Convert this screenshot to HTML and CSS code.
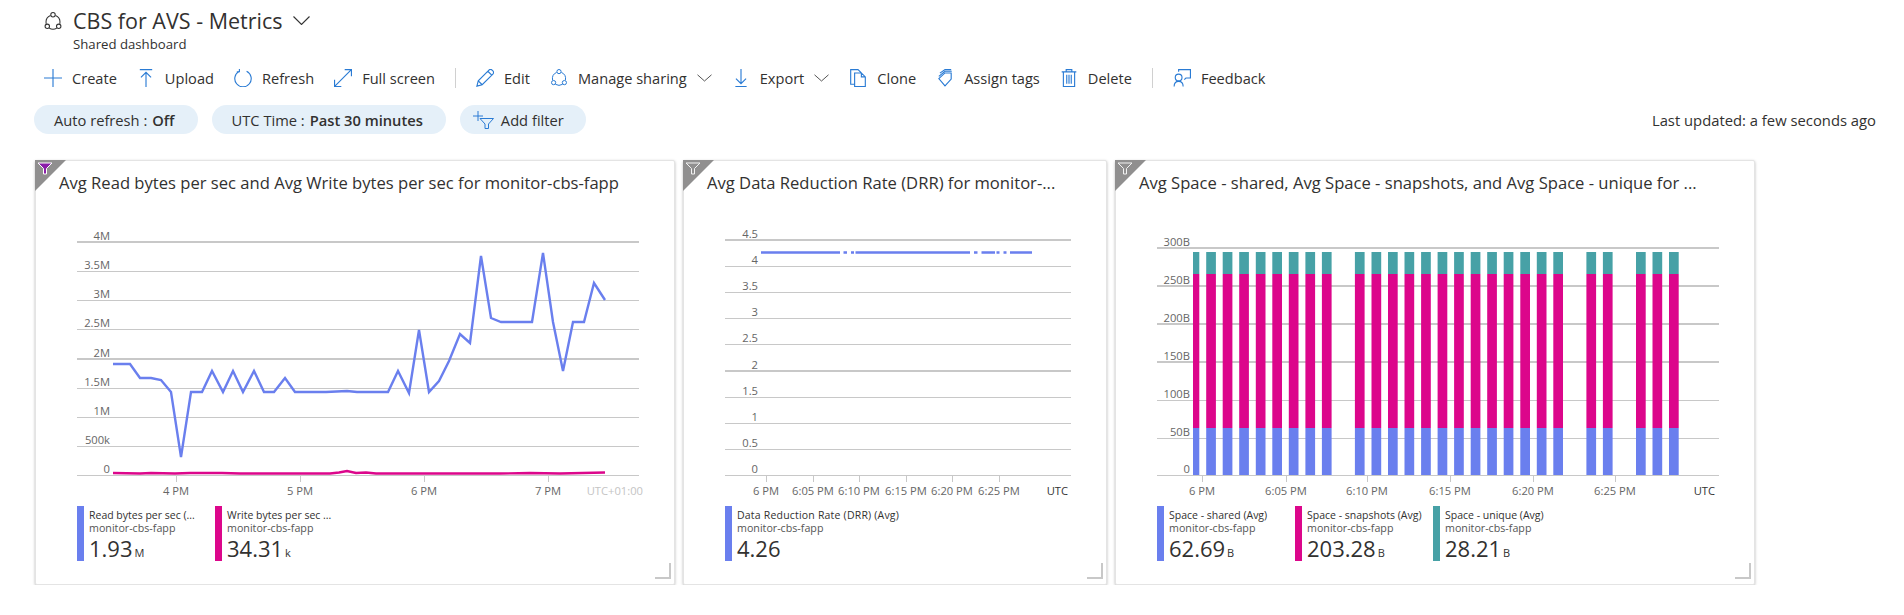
FILE: index.html
```html
<!DOCTYPE html>
<html>

<head>
    <meta charset="UTF-8">
    <title>CBS for AVS - Metrics</title>
    <link rel="stylesheet" href="styles.css">
</head>

<body>
    <header class="head">
        <div class="title-row">
            <svg class="title-icon" viewBox="0 0 16 18"><path d="M5.6 3.4A7 7 0 0 0 1.6 11.2M10.4 3.4A7 7 0 0 1 14.4 11.2M4.4 15.3A7 7 0 0 0 11.6 15.3"/><circle cx="8" cy="2.6" r="2.1"/><circle cx="2.6" cy="13.6" r="2.1"/><circle cx="13.4" cy="13.6" r="2.1"/></svg>
            <h1>CBS for AVS - Metrics</h1>
            <svg class="title-chevron" viewBox="0 0 17 9"><path d="M.5.5 8.500 8.500 16.500.5"/></svg>
        </div>
        <div class="subtitle">Shared dashboard</div>
    </header>

    <nav class="toolbar">
        <a class="tool"><svg viewBox="0 0 16 16"><path d="M8 0v16M0 8h16"/></svg>Create</a>
        <a class="tool"><svg viewBox="0 0 16 16"><path d="M2.500.5h11M8 3v13M3.500 7.500 8 3l4.500 4.500"/></svg>Upload</a>
        <a class="tool"><svg viewBox="0 0 16 16"><path d="M4.800 2A7.300 7.300 0 1 0 11.200 2M4.800 0v2.400H2.500"/></svg>Refresh</a>
        <a class="tool"><svg viewBox="0 0 16 16"><path d="M.8 15.200 15.200.8M9.500.5h6v6M.5 9.500v6h6"/></svg>Full screen</a>
        <span class="divider"></span>
        <a class="tool"><svg viewBox="0 0 16 16"><path d="M.8 15.200 2 10.500 11.500 1c.8-.8 2-.8 2.800 0l.7.700c.8.800.8 2 0 2.800L5.500 14ZM2 10.500 5.500 14M10.500 2l3.500 3.500"/></svg>Edit</a>
        <a class="tool"><svg viewBox="0 0 16 18"><path d="M5.600 3.400A7 7 0 0 0 1.600 11.200M10.400 3.400A7 7 0 0 1 14.400 11.200M4.400 15.300A7 7 0 0 0 11.600 15.300"/><circle cx="8" cy="2.600" r="2.100"/><circle cx="2.600" cy="13.600" r="2.100"/><circle cx="13.400" cy="13.600" r="2.100"/></svg>Manage sharing<svg class="chevron" viewBox="0 0 15 8"><path d="M.5.800 7.500 7 14.500.8"/></svg></a>
        <a class="tool"><svg viewBox="0 0 16 16"><path d="M8 0v13M3.500 8.500 8 13l4.500-4.500M3 15.500h10"/></svg>Export<svg class="chevron" viewBox="0 0 15 8"><path d="M.5.800 7.500 7 14.500.8"/></svg></a>
        <a class="tool"><svg viewBox="0 0 16 16"><path d="M5 13.500H1.500V.5H8l3 3M5 3.500h6l3.500 3.500v8.500H5ZM11 3.500V7h3.500"/></svg>Clone</a>
        <a class="tool"><svg viewBox="0 0 16 16"><path d="M2.500 8.500 8 3.500h5.500V9L8 15ZM2.500 6.500 8 2h6M3.500 3.700 8 .5h5.500"/></svg>Assign tags</a>
        <a class="tool"><svg viewBox="0 0 16 16"><path d="M1.500 2.500h13M5.500 2.500V.5h5v2M3 2.500v13h10v-13M6 5v8M8 5v8M10 5v8"/></svg>Delete</a>
        <span class="divider"></span>
        <a class="tool"><svg viewBox="0 0 16 16"><path d="M5 2.500V.5h10.500v7.500H11.500L10 9.500M1 15.500c0-3 1.500-4.500 4-4.500s4 1.500 4 4.500"/><circle cx="5" cy="7.500" r="3"/></svg>Feedback</a>
    </nav>

    <div class="filters">
        <div class="pill-row">
            <span class="pill">Auto refresh : <b>Off</b></span>
            <span class="pill">UTC Time : <b>Past 30 minutes</b></span>
            <span class="pill pill-add"><svg viewBox="0 0 21 18"><path d="M5 0v10M0 5h10M7 7.500h13.500l-5 5.500v4.500h-3.500V13Z"/></svg>Add filter</span>
        </div>
        <div class="updated">Last updated: a few seconds ago</div>
    </div>

    <main class="dashboard">
        <section class="card card-wide">
            <svg class="corner" viewBox="0 0 31 31"><polygon points="0,0 31,0 0,31"/><path class="funnel funnel-on" d="M3 3h14l-5.500 5.500V14h-3V8.500Z"/></svg>
            <h2 class="card-title">Avg Read bytes per sec and Avg Write bytes per sec for monitor-cbs-fapp</h2>
            <svg class="chart" viewBox="36 206 638 294">
                <g class="grid">
                    <path class="major" d="M77 242H639M77 359H639"/>
                    <path d="M77 271.500H639M77 300.500H639M77 329.500H639M77 388.500H639M77 417.500H639M77 446.500H639M77 475.500H639M176.500 475V482M300.500 475V482M424.500 475V482M548.500 475V482"/>
                </g>
                <g class="y-labels" transform="translate(110 0)">
                    <text y="240">4M</text><text y="269">3.5M</text><text y="298">3M</text><text y="327">2.5M</text><text y="357">2M</text><text y="386">1.5M</text><text y="415">1M</text><text y="444">500k</text><text y="473">0</text>
                </g>
                <g class="x-labels">
                    <text x="176" y="495">4 PM</text><text x="300" y="495">5 PM</text><text x="424" y="495">6 PM</text><text x="548" y="495">7 PM</text>
                </g>
                <text class="zone zone-light" x="643" y="495">UTC+01:00</text>
                <polyline class="line line-read" points="113,364 130,364 140,378 151,378 161,380 171,392 181,457 191,392 202,392 212,371 223,392 233,371 243,392 254,371 264,392 274,392 285,378 295,392 305,392 326,392 347,391 357,392 388,392 398,371 409,393 419,330 429,392 439,381 449,361 460,334 470,343 481,256 491,318 501,322 532,322 543,253 553,322 563,371 573,322 584,322 594,283 605,300"/>
                <polyline class="line line-write" points="113,473 140,473.500 151,473 175,473.500 190,473 222,473 240,473.500 330,473.500 339,472.500 347,471 356,473 366,472.500 376,473.500 500,473.500 530,473 560,473.500 605,472.500"/>
            </svg>
            <div class="legend">
                <div class="legend-item">
                    <span class="swatch swatch-blue"></span>
                    <div class="legend-text">
                        <div class="legend-name">Read bytes per sec (...</div>
                        <div class="legend-res">monitor-cbs-fapp</div>
                        <div class="legend-value">1.93<small>M</small></div>
                    </div>
                </div>
                <div class="legend-item">
                    <span class="swatch swatch-pink"></span>
                    <div class="legend-text">
                        <div class="legend-name">Write bytes per sec ...</div>
                        <div class="legend-res">monitor-cbs-fapp</div>
                        <div class="legend-value">34.31<small>k</small></div>
                    </div>
                </div>
            </div>
            <span class="resize"></span>
        </section>

        <section class="card card-narrow">
            <svg class="corner" viewBox="0 0 31 31"><polygon points="0,0 31,0 0,31"/><path class="funnel" d="M3 3h14l-5.500 5.500V14h-3V8.500Z"/></svg>
            <h2 class="card-title">Avg Data Reduction Rate (DRR) for monitor-...</h2>
            <svg class="chart" viewBox="684 206 422 294">
                <g class="grid">
                    <path class="major" d="M725 240H1071M725 371H1071"/>
                    <path d="M725 266.500H1071M725 292.500H1071M725 318.500H1071M725 344.500H1071M725 397.500H1071M725 423.500H1071M725 449.500H1071M725 475.500H1071M766.500 475V482M813.500 475V482M859.500 475V482M906.500 475V482M952.500 475V482M999.500 475V482"/>
                </g>
                <g class="y-labels" transform="translate(758 0)">
                    <text y="238">4.5</text><text y="264">4</text><text y="290">3.5</text><text y="316">3</text><text y="342">2.5</text><text y="369">2</text><text y="395">1.5</text><text y="421">1</text><text y="447">0.5</text><text y="473">0</text>
                </g>
                <g class="x-labels">
                    <text x="766" y="495">6 PM</text><text x="813" y="495">6:05 PM</text><text x="859" y="495">6:10 PM</text><text x="906" y="495">6:15 PM</text><text x="952" y="495">6:20 PM</text><text x="999" y="495">6:25 PM</text>
                </g>
                <text class="zone" x="1068" y="495">UTC</text>
                <path class="line line-read line-flat" d="M761 252.500H840M843.500 252.500H847M851 252.500H854M855.500 252.500H970M974 252.500H977.500M981.500 252.500H995M996.500 252.500H999.500M1003.500 252.500H1006.500M1010 252.500H1032"/>
            </svg>
            <div class="legend">
                <div class="legend-item legend-item-full">
                    <span class="swatch swatch-blue"></span>
                    <div class="legend-text">
                        <div class="legend-name legend-name-long">Data Reduction Rate (DRR) (Avg)</div>
                        <div class="legend-res">monitor-cbs-fapp</div>
                        <div class="legend-value">4.26</div>
                    </div>
                </div>
            </div>
            <span class="resize"></span>
        </section>

        <section class="card card-wide">
            <svg class="corner" viewBox="0 0 31 31"><polygon points="0,0 31,0 0,31"/><path class="funnel" d="M3 3h14l-5.500 5.500V14h-3V8.500Z"/></svg>
            <h2 class="card-title">Avg Space - shared, Avg Space - snapshots, and Avg Space - unique for ...</h2>
            <svg class="chart" viewBox="1116 206 638 294">
                <defs>
                    <g id="bar">
                        <rect class="bar-teal" x="0" y="252" width="9.700" height="22"/>
                        <rect class="bar-pink" x="0" y="274" width="9.700" height="154"/>
                        <rect class="bar-blue" x="0" y="428" width="9.700" height="47"/>
                    </g>
                </defs>
                <g class="grid">
                    <path class="major" d="M1157 248H1719M1157 286H1719M1157 324H1719M1157 362H1719"/>
                    <path d="M1157 400.500H1719M1157 438.500H1719M1157 475.500H1719M1202.500 475V482M1286.500 475V482M1367.500 475V482M1450.500 475V482M1533.500 475V482M1615.500 475V482"/>
                </g>
                <g class="y-labels" transform="translate(1190 0)">
                    <text y="246">300B</text><text y="284">250B</text><text y="322">200B</text><text y="360">150B</text><text y="398">100B</text><text y="436">50B</text><text y="473">0</text>
                </g>
                <g class="x-labels">
                    <text x="1202" y="495">6 PM</text><text x="1286" y="495">6:05 PM</text><text x="1367" y="495">6:10 PM</text><text x="1450" y="495">6:15 PM</text><text x="1533" y="495">6:20 PM</text><text x="1615" y="495">6:25 PM</text>
                </g>
                <text class="zone" x="1715" y="495">UTC</text>
                <rect class="bar-teal" x="1193" y="252" width="6.300" height="22"/>
                <rect class="bar-pink" x="1193" y="274" width="6.300" height="154"/>
                <rect class="bar-blue" x="1193" y="428" width="6.300" height="47"/>
                <use href="#bar" x="1206.200"/><use href="#bar" x="1222.700"/><use href="#bar" x="1239.200"/><use href="#bar" x="1255.800"/><use href="#bar" x="1272.300"/><use href="#bar" x="1288.800"/><use href="#bar" x="1305.400"/><use href="#bar" x="1321.900"/>
                <use href="#bar" x="1354.900"/><use href="#bar" x="1371.500"/><use href="#bar" x="1388"/><use href="#bar" x="1404.500"/><use href="#bar" x="1421.100"/><use href="#bar" x="1437.600"/><use href="#bar" x="1454.100"/><use href="#bar" x="1470.700"/><use href="#bar" x="1487.200"/><use href="#bar" x="1503.700"/><use href="#bar" x="1520.300"/><use href="#bar" x="1536.800"/><use href="#bar" x="1553.300"/>
                <use href="#bar" x="1586.400"/><use href="#bar" x="1602.900"/>
                <use href="#bar" x="1636"/><use href="#bar" x="1652.500"/><use href="#bar" x="1669"/>
            </svg>
            <div class="legend">
                <div class="legend-item">
                    <span class="swatch swatch-blue"></span>
                    <div class="legend-text">
                        <div class="legend-name">Space - shared (Avg)</div>
                        <div class="legend-res">monitor-cbs-fapp</div>
                        <div class="legend-value">62.69<small>B</small></div>
                    </div>
                </div>
                <div class="legend-item">
                    <span class="swatch swatch-pink"></span>
                    <div class="legend-text">
                        <div class="legend-name">Space - snapshots (Avg)</div>
                        <div class="legend-res">monitor-cbs-fapp</div>
                        <div class="legend-value">203.28<small>B</small></div>
                    </div>
                </div>
                <div class="legend-item">
                    <span class="swatch swatch-teal"></span>
                    <div class="legend-text">
                        <div class="legend-name">Space - unique (Avg)</div>
                        <div class="legend-res">monitor-cbs-fapp</div>
                        <div class="legend-value">28.21<small>B</small></div>
                    </div>
                </div>
            </div>
            <span class="resize"></span>
        </section>
    </main>
</body>

</html>
```

FILE: styles.css
```css
* {
    box-sizing: border-box;
}

body {
    margin: 0;
    background: #fff;
    color: #323130;
    font-family: 'Open Sans', 'Noto Sans', sans-serif;
    font-size: 14.600px;
    overflow: hidden;
}

svg {
    display: block;
    fill: none;
}

.head {
    padding: 8px 0 0 44px;
}

.title-row {
    display: flex;
    align-items: center;
    height: 26px;
}

.title-icon {
    width: 18px;
    height: 19px;
    margin-right: 11px;
    stroke: #333;
    stroke-width: 1;
}

h1 {
    margin: 0;
    font-size: 21.500px;
    font-weight: 400;
    line-height: 26px;
}

.title-chevron {
    width: 17px;
    height: 9px;
    margin: 0 0 2px 11px;
    stroke: #333;
    stroke-width: 1.100;
}

.subtitle {
    margin: 2px 0 0 29px;
    font-size: 13.200px;
    line-height: 16px;
}

.toolbar {
    display: flex;
    align-items: center;
    gap: 20px;
    height: 20px;
    margin: 16px 0 0 44px;
}

.tool {
    display: flex;
    align-items: center;
    gap: 10px;
    white-space: nowrap;
}

.tool svg {
    width: 18px;
    height: 18px;
    stroke: #2a7bd4;
    stroke-width: 1;
}

.tool .chevron {
    width: 15px;
    height: 8px;
    stroke: #555;
    stroke-width: 1;
}

.divider {
    width: 1px;
    height: 20px;
    background: #d0d0d0;
}

.filters {
    display: flex;
    align-items: center;
    justify-content: space-between;
    margin-top: 17px;
    padding: 0 28px 0 34px;
}

.pill-row {
    display: flex;
    gap: 14px;
}

.pill {
    display: flex;
    align-items: center;
    gap: 5px;
    height: 29px;
    padding: 0 23px 0 20px;
    border-radius: 15px;
    background: #e5f0f9;
    font-size: 14.700px;
    white-space: nowrap;
}

.pill b {
    font-weight: 600;
}

.pill-add {
    gap: 7px;
    padding: 0 22px 0 13px;
}

.pill-add svg {
    width: 21px;
    height: 18px;
    stroke: #2a7bd4;
    stroke-width: 1;
}

.updated {
    font-size: 14.800px;
    white-space: nowrap;
}

.dashboard {
    display: flex;
    gap: 8px;
    margin: 26px 0 0 35px;
}

.card {
    position: relative;
    height: 425px;
    border: 1px solid #e4e4e4;
    border-radius: 2px;
    background: #fff;
    box-shadow: 0 1px 3px rgba(0, 0, 0, 0.28);
}

.card-wide {
    width: 640px;
}

.card-narrow {
    width: 424px;
}

.corner {
    position: absolute;
    top: -1px;
    left: -1px;
    width: 31px;
    height: 31px;
}

.corner polygon {
    fill: #908f8f;
}

.funnel {
    fill: none;
    stroke: #f2f2f2;
    stroke-width: 1;
}

.funnel-on {
    fill: #8a1ea8;
    stroke: #fff;
}

.card-title {
    display: flex;
    align-items: center;
    height: 45px;
    margin: 0;
    padding: 0 0 2px 23px;
    font-size: 16.600px;
    font-weight: 400;
    white-space: nowrap;
}

.chart {
    width: 100%;
    height: 294px;
}

.grid path {
    stroke: #c8c8c8;
    stroke-width: 1;
}

.grid .major {
    stroke-width: 2;
}

.chart text {
    font-size: 11.200px;
    fill: #666;
}

.y-labels text {
    text-anchor: end;
}

.x-labels text {
    text-anchor: middle;
}

.chart .zone {
    text-anchor: end;
    fill: #333;
}

.chart .zone-light {
    fill: #c4c4c4;
}

.line {
    fill: none;
    stroke-width: 2.400;
}

.line-read {
    stroke: #6a7fee;
}

.line-write {
    stroke: #dc068b;
}

.line-flat {
    stroke-width: 2.500;
}

.bar-teal {
    fill: #47a1a6;
}

.bar-pink {
    fill: #dc068b;
}

.bar-blue {
    fill: #6a7fee;
}

.legend {
    display: flex;
    margin: 6px 0 0 41px;
}

.legend-item {
    display: flex;
    gap: 5px;
    width: 138px;
    height: 55px;
}

.legend-item-full {
    width: auto;
}

.swatch {
    width: 7px;
    flex: none;
}

.swatch-blue {
    background: #6a7fee;
}

.swatch-pink {
    background: #dc068b;
}

.swatch-teal {
    background: #47a1a6;
}

.legend-text {
    padding-top: 3px;
    font-size: 10.500px;
    line-height: 13px;
    white-space: nowrap;
}

.legend-name-long {
    letter-spacing: 0.2px;
}

.legend-res {
    font-size: 10.700px;
    color: #555;
}

.legend-value {
    font-size: 22px;
    line-height: 27px;
}

.legend-value small {
    margin-left: 2px;
    font-size: 11px;
}

.resize {
    position: absolute;
    right: 3px;
    bottom: 5px;
    width: 16px;
    height: 16px;
    border-right: 2px solid #c8c8c8;
    border-bottom: 2px solid #c8c8c8;
}
```
